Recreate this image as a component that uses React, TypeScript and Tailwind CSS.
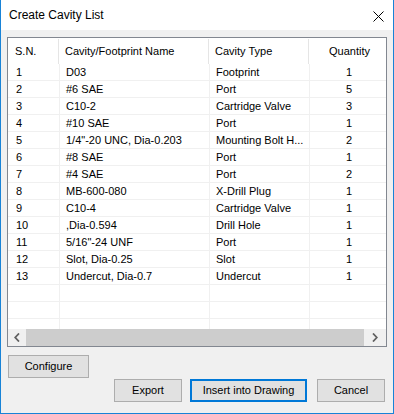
const rows: [string, string, string, string][] = [
  ['1', 'D03', 'Footprint', '1'],
  ['2', '#6 SAE', 'Port', '5'],
  ['3', 'C10-2', 'Cartridge Valve', '3'],
  ['4', '#10 SAE', 'Port', '1'],
  ['5', '1/4"-20 UNC, Dia-0.203', 'Mounting Bolt H...', '2'],
  ['6', '#8 SAE', 'Port', '1'],
  ['7', '#4 SAE', 'Port', '2'],
  ['8', 'MB-600-080', 'X-Drill Plug', '1'],
  ['9', 'C10-4', 'Cartridge Valve', '1'],
  ['10', ',Dia-0.594', 'Drill Hole', '1'],
  ['11', '5/16"-24 UNF', 'Port', '1'],
  ['12', 'Slot, Dia-0.25', 'Slot', '1'],
  ['13', 'Undercut, Dia-0.7', 'Undercut', '1'],
  ['', '', '', ''],
  ['', '', '', ''],
  ['', '', '', ''],
];

function Chevron({ dir }: { dir: 'left' | 'right' }) {
  return (
    <svg width="6" height="9" viewBox="0 0 6 9">
      <path
        d={dir === 'left' ? 'M5 0.5 L1.2 4.5 L5 8.5' : 'M1 0.5 L4.8 4.5 L1 8.5'}
        fill="none"
        stroke="#606060"
        strokeWidth="1.8"
      />
    </svg>
  );
}

function WinButton({ label, width, primary }: { label: string; width: string; primary?: boolean }) {
  return (
    <button
      className={
        primary
          ? `h-[23px] ${width} bg-[#e1e1e1] border-2 border-[#0078d7] text-black leading-none`
          : `h-[23px] ${width} bg-[#e1e1e1] border border-[#adadad] text-black leading-none`
      }
    >
      {label}
    </button>
  );
}

export default function App() {
  return (
    <div className="w-[394px] h-[414px] flex flex-col bg-[#f0f0f0] border-x border-b border-[#1883d7] text-[11px] text-black font-['Liberation_Sans',Arial,sans-serif]">
      {/* Title bar */}
      <div className="h-[30px] shrink-0 bg-white flex items-center justify-between pl-[8px] pr-[9px]">
        <span className="text-[12px]">Create Cavity List</span>
        <svg width="11" height="11" viewBox="0 0 11 11" className="mt-[2px]">
          <path d="M0.5 0.5 L10.5 10.5 M10.5 0.5 L0.5 10.5" stroke="#000" strokeWidth="1" />
        </svg>
      </div>

      <div className="flex-1 flex flex-col px-[6px] pt-[7px]">
        {/* List view */}
        <div className="h-[310px] border border-[#828790] bg-white flex flex-col overflow-hidden">
          <div className="h-[26px] shrink-0 grid grid-cols-[51px_150px_100px_1fr]">
            <div className="mt-[1px] border-r border-[#e5e5e5] pl-[7px] flex items-center">S.N.</div>
            <div className="mt-[1px] border-r border-[#e5e5e5] pl-[6px] flex items-center">Cavity/Footprint Name</div>
            <div className="mt-[1px] border-r border-[#e5e5e5] pl-[6px] flex items-center">Cavity Type</div>
            <div className="mt-[1px] flex items-center justify-center pl-[4px]">Quantity</div>
          </div>
          <div className="flex-1 overflow-hidden">
            {rows.map((r, i) => (
              <div key={i} className="h-[17px] grid grid-cols-[52px_150px_100px_1fr] border-b border-[#f0f0f0]">
                <div className="border-r border-[#f0f0f0] pl-[8px] flex items-center">{r[0]}</div>
                <div className="border-r border-[#f0f0f0] pl-[6px] flex items-center whitespace-nowrap">{r[1]}</div>
                <div className="border-r border-[#f0f0f0] pl-[6px] flex items-center whitespace-nowrap">{r[2]}</div>
                <div className="flex items-center justify-center pl-[2px]">{r[3]}</div>
              </div>
            ))}
          </div>
          {/* Horizontal scrollbar */}
          <div className="h-[17px] shrink-0 flex bg-[#f0f0f0]">
            <div className="w-[18px] flex items-center justify-center">
              <Chevron dir="left" />
            </div>
            <div className="w-[338px] bg-[#cdcdcd]" />
            <div className="flex-1 flex items-center justify-center">
              <Chevron dir="right" />
            </div>
          </div>
        </div>

        <div className="mt-[8px] ml-[1px]">
          <WinButton label="Configure" width="w-[81px]" />
        </div>

        <div className="mt-[1px] mr-[2px] flex justify-end">
          <WinButton label="Export" width="w-[68px]" />
          <div className="ml-[8px]">
            <WinButton label="Insert into Drawing" width="w-[117px]" primary />
          </div>
          <div className="ml-[10px]">
            <WinButton label="Cancel" width="w-[68px]" />
          </div>
        </div>
      </div>
    </div>
  );
}
